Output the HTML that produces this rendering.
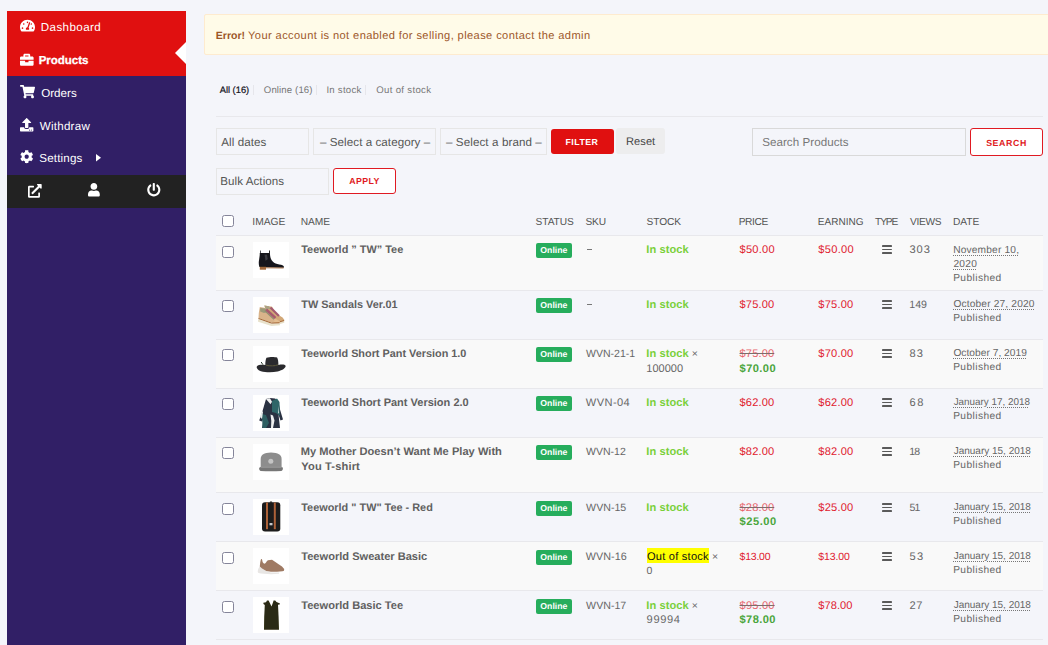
<!DOCTYPE html>
<html lang="en">
<head>
<meta charset="utf-8">
<title>Products</title>
<style>
*{box-sizing:border-box;margin:0;padding:0}
html,body{width:1048px;height:645px;overflow:hidden;background:#f4f5fa;font-family:"Liberation Sans",sans-serif}
body{position:relative}
.a{position:absolute}
.t{position:absolute;white-space:pre;line-height:16px;text-rendering:geometricPrecision;font-family:"Liberation Sans",sans-serif}
#side{left:7px;top:11px;width:179px;height:634px;background:#311f66}
#red{left:7px;top:11px;width:179px;height:65px;background:#e01010}
#tri{left:175px;top:42px;width:0;height:0;border-style:solid;border-width:11px 11px 11px 0;border-color:transparent #fff transparent transparent}
#dark{left:7px;top:175px;width:179px;height:33px;background:#222}
svg{position:absolute;overflow:visible}
#alert{left:204px;top:14px;width:860px;height:41px;background:#fffbe8;border:1px solid #feebcf;border-radius:2px}
.hr{left:216px;width:827px;height:1px;background:#e8e8ec}
.sel{height:27px;border:1px solid #e6e6e6;background:#f4f5fa}
.btn{border-radius:3px}
.row{left:216px;width:827px}
.odd{background:#f9f9f9}
.cb{left:222px;width:12px;height:12px;border:1px solid #85859a;border-radius:2.5px;background:#fff}
.img{left:253px;width:36px;height:36px;background:#fff}
.bd{left:536px;width:36px;height:15px;background:#26ad5c;border-radius:2px}
.bars{left:881.5px;width:10.5px;height:9px}
.bars i{position:absolute;left:0;width:100%;height:1.6px;background:#5a5a5a;border-radius:.4px}
.sep{width:1px;height:10px;top:85px;background:#e6e6eb}
</style>
</head>
<body>
<!-- sidebar -->
<div class="a" id="side"></div>
<div class="a" id="red"></div>
<div class="a" id="tri"></div>
<div class="a" id="dark"></div>
<svg style="left:20.1px;top:19.3px" width="15.02" height="13.35" viewBox="0 0 576 512"><path fill="#fff" d="M288 32C128.94 32 0 160.94 0 320c0 52.8 14.25 102.26 39.06 144.8 5.61 9.62 16.3 15.2 27.44 15.2h443c11.14 0 21.83-5.58 27.44-15.2C561.75 422.26 576 372.8 576 320c0-159.06-128.94-288-288-288zm0 64c14.71 0 26.58 10.13 30.32 23.65-1.11 2.26-2.64 4.23-3.45 6.67l-9.22 27.67c-5.13 3.49-10.97 6.01-17.64 6.01-17.67 0-32-14.33-32-32S270.33 96 288 96zM96 384c-17.67 0-32-14.33-32-32s14.33-32 32-32 32 14.33 32 32-14.33 32-32 32zm48-160c-17.67 0-32-14.33-32-32s14.33-32 32-32 32 14.33 32 32-14.33 32-32 32zm246.77-72.41l-61.33 184C343.13 347.33 352 364.54 352 384c0 11.72-3.38 22.55-8.88 32H232.88c-5.5-9.45-8.88-20.28-8.88-32 0-33.94 26.5-61.43 59.9-63.59l61.34-184.01c4.17-12.56 17.73-19.45 30.36-15.17 12.57 4.19 19.35 17.79 15.17 30.36zm14.66 57.2l15.52-46.55c3.47-1.29 7.13-2.23 11.05-2.23 17.67 0 32 14.33 32 32s-14.33 32-32 32c-11.38-.01-20.89-6.28-26.57-15.22zM480 384c-17.67 0-32-14.33-32-32s14.33-32 32-32 32 14.33 32 32-14.33 32-32 32z"/></svg>
<svg style="left:20.1px;top:52.5px" width="13.60" height="13.60" viewBox="0 0 512 512"><path fill="#fff" d="M320 336c0 8.84-7.16 16-16 16h-96c-8.84 0-16-7.16-16-16v-48H0v144c0 25.6 22.4 48 48 48h416c25.6 0 48-22.4 48-48V288H320v48zm144-208h-80V80c0-25.6-22.4-48-48-48H176c-25.6 0-48 22.4-48 48v48H48c-25.6 0-48 22.4-48 48v80h512v-80c0-25.6-22.4-48-48-48zm-144 0H192V96h128v32z"/></svg>
<svg style="left:20.4px;top:85.3px" width="15.02" height="13.35" viewBox="0 0 576 512"><path fill="#fff" d="M528.12 301.319l47.273-208C578.806 78.301 567.391 64 551.99 64H159.208l-9.166-44.81C147.758 8.021 137.93 0 126.529 0H24C10.745 0 0 10.745 0 24v16c0 13.255 10.745 24 24 24h69.883l70.248 343.435C147.325 417.1 136 435.222 136 456c0 30.928 25.072 56 56 56s56-25.072 56-56c0-15.674-6.447-29.835-16.824-40h209.647C430.447 426.165 424 440.326 424 456c0 30.928 25.072 56 56 56s56-25.072 56-56c0-22.172-12.888-41.332-31.579-50.405l5.517-24.276c3.413-15.018-8.002-29.319-23.403-29.319H218.117l-6.545-32h293.145c11.206 0 20.92-7.754 23.403-18.681z"/></svg>
<svg style="left:20.4px;top:117.9px" width="13.40" height="13.40" viewBox="0 0 512 512"><path fill="#fff" d="M296 384h-80c-13.3 0-24-10.7-24-24V192h-87.7c-17.8 0-26.7-21.5-14.1-34.1L242.3 5.7c7.5-7.5 19.8-7.5 27.3 0l152.2 152.2c12.6 12.6 3.7 34.1-14.1 34.1H320v168c0 13.3-10.7 24-24 24zm216-8v112c0 13.3-10.7 24-24 24H24c-13.3 0-24-10.7-24-24V376c0-13.3 10.7-24 24-24h136v8c0 30.9 25.1 56 56 56h80c30.9 0 56-25.1 56-56v-8h136c13.3 0 24 10.7 24 24zm-124 88c0-11-9-20-20-20s-20 9-20 20 9 20 20 20 20-9 20-20zm64 0c0-11-9-20-20-20s-20 9-20 20 9 20 20 20 20-9 20-20z"/></svg>
<svg style="left:20.1px;top:150.4px" width="13.40" height="13.40" viewBox="0 0 512 512"><path fill="#fff" d="M487.4 315.7l-42.6-24.6c4.3-23.2 4.3-47 0-70.2l42.6-24.6c4.9-2.8 7.1-8.6 5.5-14-11.1-35.6-30-67.8-54.7-94.6-3.8-4.1-10-5.1-14.8-2.3L380.8 110c-17.9-15.4-38.5-27.3-60.8-35.1V25.800c0-5.600-3.900-10.500-9.400-11.700-36.700-8.200-74.300-7.800-109.200 0-5.500 1.200-9.400 6.100-9.400 11.700V75c-22.200 7.900-42.800 19.800-60.800 35.100L88.700 85.500c-4.900-2.800-11-1.900-14.800 2.300-24.700 26.700-43.600 58.900-54.700 94.600-1.700 5.400.6 11.200 5.500 14L67.300 221c-4.300 23.200-4.300 47 0 70.200l-42.600 24.600c-4.900 2.800-7.100 8.600-5.500 14 11.100 35.600 30 67.800 54.700 94.600 3.800 4.100 10 5.100 14.800 2.300l42.600-24.600c17.900 15.400 38.500 27.300 60.800 35.100v49.200c0 5.600 3.900 10.500 9.400 11.700 36.700 8.200 74.300 7.800 109.200 0 5.500-1.200 9.400-6.100 9.400-11.700v-49.200c22.200-7.900 42.800-19.800 60.800-35.100l42.600 24.600c4.900 2.800 11 1.900 14.800-2.300 24.700-26.700 43.600-58.900 54.700-94.600 1.500-5.500-.7-11.300-5.600-14.100zM256 336c-44.100 0-80-35.900-80-80s35.900-80 80-80 80 35.900 80 80-35.900 80-80 80z"/></svg>
<svg style="left:96px;top:153.6px" width="5" height="7.6" viewBox="0 0 5 7.6"><path fill="#fff" d="M0 0L5 3.800L0 7.600z"/></svg>
<svg style="left:28px;top:183.5px" width="13.70" height="13.70" viewBox="0 0 512 512"><path fill="#fff" d="M432 320h-32a16 16 0 0 0-16 16v112H64V128h144a16 16 0 0 0 16-16V80a16 16 0 0 0-16-16H48a48 48 0 0 0-48 48v352a48 48 0 0 0 48 48h352a48 48 0 0 0 48-48V336a16 16 0 0 0-16-16zM488 0H360c-21.370 0-32.050 25.910-17 41l35.730 35.730L135 320.370a24 24 0 0 0 0 34L157.670 377a24 24 0 0 0 34 0l243.610-243.680L471 169c15 15 41 4.500 41-17V24a24 24 0 0 0-24-24z"/></svg>
<svg style="left:88.3px;top:183.4px" width="11.81" height="13.50" viewBox="0 0 448 512"><path fill="#fff" d="M224 256c70.700 0 128-57.300 128-128S294.700 0 224 0 96 57.300 96 128s57.300 128 128 128zm89.600 32h-16.700c-22.200 10.200-46.900 16-72.900 16s-50.600-5.800-72.900-16h-16.700C60.200 288 0 348.200 0 422.400V464c0 26.500 21.500 48 48 48h352c26.500 0 48-21.500 48-48v-41.600c0-74.200-60.200-134.400-134.400-134.400z"/></svg>
<svg style="left:147.3px;top:183.3px" width="13.60" height="13.60" viewBox="0 0 512 512"><path fill="#fff" d="M400 54.100c63 45 104 118.600 104 201.900 0 136.800-110.800 247.700-247.500 248C120 504.300 8.200 393 8 256.400 7.900 173.100 48.900 99.300 111.800 54.200c11.700-8.300 28-4.800 35 7.700L162.600 90c5.900 10.500 3.100 23.800-6.600 31-41.500 30.800-68 79.600-68 134.900-.1 92.300 74.500 168.100 168 168.100 91.600 0 168.600-74.200 168-169.100-.3-51.800-24.700-101.800-68.100-134-9.700-7.200-12.400-20.500-6.500-30.900l15.800-28.100c7-12.400 23.200-16.100 34.800-7.800zM296 264V24c0-13.300-10.700-24-24-24h-32c-13.300 0-24 10.700-24 24v240c0 13.300 10.700 24 24 24h32c13.300 0 24-10.700 24-24z"/></svg>
<!-- alert -->
<div class="a" id="alert"></div>
<!-- tabs -->
<div class="a sep" style="left:253px"></div>
<div class="a sep" style="left:316px"></div>
<div class="a sep" style="left:365px"></div>
<div class="a hr" style="top:116px"></div>
<!-- filters -->
<div class="a sel" style="left:216px;top:128px;width:93px"></div>
<div class="a sel" style="left:313px;top:128px;width:123px"></div>
<div class="a sel" style="left:440px;top:128px;width:107px"></div>
<div class="a btn" style="left:551px;top:129px;width:63px;height:25px;background:#e01010"></div>
<div class="a btn" style="left:616px;top:128px;width:49px;height:26px;background:#ededee"></div>
<div class="a" style="left:752px;top:128px;width:214px;height:28px;border:1px solid #d9d9d9;background:#f4f5fa"></div>
<div class="a btn" style="left:970px;top:128px;width:73px;height:28px;border:1px solid #e01a22;background:#fff"></div>
<div class="a sel" style="left:216px;top:168px;width:113px"></div>
<div class="a btn" style="left:333px;top:168px;width:63px;height:26px;border:1px solid #e01a22;background:#fff"></div>
<!-- table -->
<div class="a cb" style="top:215px"></div>
<div class="a hr" style="top:235px"></div>
<svg width="0" height="0" style="left:0;top:0"><defs><filter id="bl" x="-10%" y="-10%" width="120%" height="120%"><feGaussianBlur stdDeviation="0.45"/></filter></defs></svg>
<div class="a row odd" style="top:236px;height:54px"></div>
<div class="a hr" style="top:290px"></div>
<div class="a cb" style="top:246px"></div>
<svg style="left:253px;top:242px" width="36" height="36" viewBox="0 0 36 36"><rect width="36" height="36" fill="#fff"/><g filter="url(#bl)"><path fill="#16161a" d="M7.100 8.400L7.800 8.400L7.800 11L16 11L16 8.400L16.900 8.400L16.900 11C17 14 17.500 16 18.500 18C20 20.500 22 21.500 24.300 22C27 22.600 29.500 22.800 30.500 24C31.200 24.800 31 25.700 30.500 25.700L13 25.300L6.400 24.900C5.600 22.500 5.600 20 6.200 17C6.600 14.500 6.800 13 6.800 11L7.100 11Z"/><path fill="#3a3a42" d="M11.500 12.500l2.500 .300l.800 4.500l-2.300 1.500z"/><rect x="6.800" y="24.800" width="6.200" height="2.900" fill="#a0673a"/><path d="M12.900 25.800L30.600 26" stroke="#a0673a" stroke-width=".9"/></g></svg>
<div class="a bd" style="top:243px"></div>
<div class="a bars" style="top:245.3px"><i style="top:0"></i><i style="top:3.55px"></i><i style="top:7.1px"></i></div>
<div class="a" style="left:586.5px;top:249px;width:5.5px;height:1px;background:#777"></div>
<div class="a row" style="top:291px;height:48px"></div>
<div class="a hr" style="top:339px"></div>
<div class="a cb" style="top:300px"></div>
<svg style="left:253px;top:297px" width="36" height="36" viewBox="0 0 36 36"><rect width="36" height="36" fill="#fff"/><g filter="url(#bl)"><path fill="#d2a878" d="M11.300 8.400L19.100 9.700L23 16.500L29.600 20.400L31.200 22.700L30.900 24.300L27 25L20 22L13 14Z"/><path fill="#e6dfc8" d="M26.500 25.200L31.200 23.900L31.300 25.700L27 27Z"/><path stroke="#a0612f" stroke-width=".9" d="M26.500 24.900L31.200 23.500"/><path fill="#a9a284" d="M11.300 8.400L16 9.200L17.500 12L13 12Z"/><path stroke="#a45a70" stroke-width="2.200" d="M17.500 10.500L26 19"/><path fill="#e8e2cc" d="M5.100 22.100L18.500 26.600L27 26.300L27 28.200L18.500 28.900L5.100 24.700Z"/><path fill="#d9b38a" d="M6.800 10L12.600 11L16.500 17.800L23 21.700L26.600 24.300L26.300 26L18.500 25.800L5.500 21.300L5.800 15.900Z"/><path fill="#9c9a7a" d="M7.200 11L12.500 11.500L14.500 15L11 16L7.200 14.500Z"/><path stroke="#8f8f70" stroke-width="1.200" d="M11.800 13.800L21 22.300"/><path stroke="#a85a6e" stroke-width="2.400" d="M13.200 12.500L22.500 21"/><path fill="#e3bd90" d="M21.700 21.700L26.600 24.300L26.300 26L21 25.800Z"/><path fill="none" stroke="#a0612f" stroke-width="1" d="M5.500 21.500L18.500 26.100L26.600 25.800"/></g></svg>
<div class="a bd" style="top:298px"></div>
<div class="a bars" style="top:300.3px"><i style="top:0"></i><i style="top:3.55px"></i><i style="top:7.1px"></i></div>
<div class="a" style="left:586.5px;top:304px;width:5.5px;height:1px;background:#777"></div>
<div class="a row odd" style="top:340px;height:48px"></div>
<div class="a hr" style="top:388px"></div>
<div class="a cb" style="top:349px"></div>
<svg style="left:253px;top:346px" width="36" height="36" viewBox="0 0 36 36"><rect width="36" height="36" fill="#fff"/><g filter="url(#bl)"><path fill="#2c2c2f" d="M12.300 19c0-3 .400-6 1.200-7.200 3-.900 8-.900 10.600-.200 1 1.500 1.300 4.500 1.300 7.400 3-.600 6.500-.800 7.200.800.500 2-3 4.500-8 5.700-5 1.100-12 1.100-16.600-.300C4.500 24 3 21.500 4 20.200c1.200-1.500 5-1.500 8.300-1.200z"/><path d="M13 19.200c4 1 9 .800 12-.400" stroke="#5a563a" stroke-width="1" fill="none"/><path d="M8.200 16l1.600 2.600" stroke="#2c3a30" stroke-width="1" fill="none"/></g></svg>
<div class="a bd" style="top:347px"></div>
<div class="a bars" style="top:349.3px"><i style="top:0"></i><i style="top:3.55px"></i><i style="top:7.1px"></i></div>
<div class="a row" style="top:389px;height:48px"></div>
<div class="a hr" style="top:437px"></div>
<div class="a cb" style="top:398px"></div>
<svg style="left:253px;top:395px" width="36" height="36" viewBox="0 0 36 36"><rect width="36" height="36" fill="#fff"/><g filter="url(#bl)"><path fill="#2b3042" d="M13 4l4-1 5 .500 3 2 2 9 3 10-2.500 1-2-6 1.500 13.500H9l2.500-12-2.500 5.500-2.800-1 3.500-10z"/><path fill="#2f6668" d="M19 6l5-2.500 2.500 3.500.500 14-4-3-4-1z"/><path fill="#2d5f62" d="M9 19l4 1 3 8-3 5H9.500z"/><path fill="#f2f2f2" d="M13 4l4-.800 2 3.500-1.500 2.500z"/><path fill="#eef0f0" d="M17.500 19.500l2.500 1 1.500 5-1.500 7.500h-2l.300-7z"/><path fill="#e8eeee" d="M7 22l2-6 1 1-1 7z"/><path fill="#e8eeee" d="M25.500 11l.600 7-.900.500z"/></g></svg>
<div class="a bd" style="top:396px"></div>
<div class="a bars" style="top:398.3px"><i style="top:0"></i><i style="top:3.55px"></i><i style="top:7.1px"></i></div>
<div class="a row odd" style="top:438px;height:54px"></div>
<div class="a hr" style="top:492px"></div>
<div class="a cb" style="top:447px"></div>
<svg style="left:253px;top:444px" width="36" height="36" viewBox="0 0 36 36"><rect width="36" height="36" fill="#fff"/><g filter="url(#bl)"><path fill="#8d8d8d" d="M7.700 23.500L7.700 15C7.700 10.500 11 8.600 18 8.400C25 8.600 28.600 10.500 28.600 15L28.600 23.500Z"/><path fill="#777" d="M6.100 24.600c0-1 .800-1.600 1.600-1.600h20.900c.800 0 1.300.600 1.300 1.600s-.500 2.200-1.500 2.400c-7 .400-14 .400-20.800 0-1-.200-1.500-1.400-1.500-2.400z"/><path stroke="#a8a8a8" stroke-width=".700" d="M7.500 23.300h21.300"/><circle cx="17.800" cy="17.200" r="2.500" fill="#c4c4c4"/></g></svg>
<div class="a bd" style="top:445px"></div>
<div class="a bars" style="top:447.3px"><i style="top:0"></i><i style="top:3.55px"></i><i style="top:7.1px"></i></div>
<div class="a row" style="top:493px;height:48px"></div>
<div class="a hr" style="top:541px"></div>
<div class="a cb" style="top:503px"></div>
<svg style="left:253px;top:499px" width="36" height="36" viewBox="0 0 36 36"><rect width="36" height="36" fill="#fff"/><g filter="url(#bl)"><rect x="9" y="3.200" width="18.300" height="29.300" rx="3" fill="#1b1b1d"/><rect x="16.800" y="2.600" width="2.400" height="1.200" rx=".5" fill="#1b1b1d"/><rect x="13" y="3.500" width="2" height="26.700" fill="#ad6238"/><rect x="20.800" y="3.500" width="2" height="26.700" fill="#ad6238"/><rect x="16.500" y="24" width="3" height="2.300" fill="#c9c9cc"/></g></svg>
<div class="a bd" style="top:501px"></div>
<div class="a bars" style="top:503.3px"><i style="top:0"></i><i style="top:3.55px"></i><i style="top:7.1px"></i></div>
<div class="a row odd" style="top:542px;height:48px"></div>
<div class="a hr" style="top:590px"></div>
<div class="a cb" style="top:552px"></div>
<svg style="left:253px;top:548px" width="36" height="36" viewBox="0 0 36 36"><rect width="36" height="36" fill="#fff"/><g filter="url(#bl)"><path fill="#e8e6e4" d="M4.800 23C5 21 6 19 6.800 18.500L9 20.500L13.300 23L18 24.400L26.300 24.600L26 25.800C18 26.500 9 26 5.500 25C4.800 24.500 4.600 23.800 4.800 23Z"/><path fill="#9f7a63" d="M6.800 18.500C7 16 7.300 13.500 7.900 11.500C8.300 10.800 9 11 9.200 12C9.500 14 10 15.500 11.500 15.800C12.800 15.500 13.500 13 15 12.200L19 11.800L22 13.800L26 16.500L29 18.500L31.200 21L31 22.800L29.500 23.300L24 23.800L18 23.800L13.300 23L9 20.500Z"/></g></svg>
<div class="a bd" style="top:550px"></div>
<div class="a bars" style="top:552.3px"><i style="top:0"></i><i style="top:3.55px"></i><i style="top:7.1px"></i></div>
<div class="a" style="left:647px;top:548px;width:62px;height:15px;background:#ffff00"></div>
<div class="a row" style="top:591px;height:48px"></div>
<div class="a hr" style="top:639px"></div>
<div class="a cb" style="top:601px"></div>
<svg style="left:253px;top:597px" width="36" height="36" viewBox="0 0 36 36"><rect width="36" height="36" fill="#fff"/><g filter="url(#bl)"><path fill="#2b2a12" d="M10.300 5.800L13 5.200L14 3.600L15.600 3.400L16.600 5.500L18.500 9.400L20 5.500L20.600 3.500L22.200 3.400L23.500 5L27 6.600L26.600 7.600L25 7.800L25.600 20L26 32.800L11 32.800L11.200 20L11.800 8L10.500 7Z"/></g></svg>
<div class="a bd" style="top:599px"></div>
<div class="a bars" style="top:601.3px"><i style="top:0"></i><i style="top:3.55px"></i><i style="top:7.1px"></i></div>
<span class="t" style="left:40.80px;top:20px;font-size:11.6px;color:#fff;letter-spacing:0.400px;">Dashboard</span>
<span class="t" style="left:38.65px;top:53px;font-size:11.52px;font-weight:700;color:#fff;letter-spacing:-0.021px;-webkit-text-stroke:0.3px #fff;">Products</span>
<span class="t" style="left:41.20px;top:86px;font-size:11.6px;color:#fff;letter-spacing:0.020px;">Orders</span>
<span class="t" style="left:39.80px;top:119px;font-size:11.6px;color:#fff;letter-spacing:0.236px;">Withdraw</span>
<span class="t" style="left:39.30px;top:151px;font-size:11.6px;color:#fff;letter-spacing:0.171px;">Settings</span>
<span class="t" style="left:215.85px;top:28px;font-size:10.52px;font-weight:700;color:#9c5628;">Error!</span>
<span class="t" style="left:248.10px;top:28px;font-size:11.1px;color:#9c5628;letter-spacing:0.397px;">Your account is not enabled for selling, please contact the admin</span>
<span class="t" style="left:219.70px;top:82px;font-size:9.29px;color:#15151f;letter-spacing:0.007px;-webkit-text-stroke:0.22px #15151f;">All (16)</span>
<span class="t" style="left:263.80px;top:83px;font-size:9.6px;color:#777;letter-spacing:0.125px;">Online (16)</span>
<span class="t" style="left:326.40px;top:83px;font-size:9.6px;color:#777;letter-spacing:0.271px;">In stock</span>
<span class="t" style="left:376.30px;top:83px;font-size:9.6px;color:#777;letter-spacing:0.318px;">Out of stock</span>
<span class="t" style="left:221.30px;top:135px;font-size:11.6px;color:#555;letter-spacing:0.075px;">All dates</span>
<span class="t" style="left:320.00px;top:135px;font-size:11.6px;color:#555;letter-spacing:0.065px;">– Select a category –</span>
<span class="t" style="left:446.00px;top:135px;font-size:11.6px;color:#555;letter-spacing:0.100px;">– Select a brand –</span>
<span class="t" style="left:565.50px;top:134px;font-size:8.8px;font-weight:700;color:#fff;letter-spacing:0.450px;">FILTER</span>
<span class="t" style="left:626.00px;top:134px;font-size:11.1px;color:#444;letter-spacing:0.050px;">Reset</span>
<span class="t" style="left:762.20px;top:135px;font-size:11.6px;color:#777;letter-spacing:0.046px;">Search Products</span>
<span class="t" style="left:986.15px;top:135px;font-size:8.8px;font-weight:700;color:#e01a22;letter-spacing:0.590px;">SEARCH</span>
<span class="t" style="left:220.30px;top:174px;font-size:11.6px;color:#555;letter-spacing:0.059px;">Bulk Actions</span>
<span class="t" style="left:349.25px;top:173px;font-size:8.8px;font-weight:700;color:#e01a22;letter-spacing:0.400px;">APPLY</span>
<span class="t" style="left:252.30px;top:215px;font-size:10.3px;color:#555;letter-spacing:-0.012px;">IMAGE</span>
<span class="t" style="left:300.65px;top:215px;font-size:10.22px;color:#555;letter-spacing:-0.017px;">NAME</span>
<span class="t" style="left:535.60px;top:215px;font-size:10.2px;color:#555;letter-spacing:-0.090px;">STATUS</span>
<span class="t" style="left:585.40px;top:215px;font-size:10.2px;color:#555;letter-spacing:-0.125px;">SKU</span>
<span class="t" style="left:646.50px;top:215px;font-size:10.2px;color:#555;letter-spacing:-0.062px;">STOCK</span>
<span class="t" style="left:738.65px;top:215px;font-size:10.2px;color:#555;letter-spacing:-0.350px;">PRICE</span>
<span class="t" style="left:817.85px;top:215px;font-size:10.04px;color:#555;letter-spacing:-0.008px;">EARNING</span>
<span class="t" style="left:875.05px;top:215px;font-size:10.2px;color:#555;letter-spacing:-1.100px;">TYPE</span>
<span class="t" style="left:910.10px;top:215px;font-size:10.2px;color:#555;letter-spacing:-0.325px;">VIEWS</span>
<span class="t" style="left:952.95px;top:215px;font-size:10.22px;color:#555;letter-spacing:-0.017px;">DATE</span>
<span class="t" style="left:301.25px;top:242px;font-size:10.91px;font-weight:700;color:#606060;">Teeworld ” TW” Tee</span>
<span class="t" style="left:540.35px;top:242px;font-size:8.71px;font-weight:700;color:#fff;letter-spacing:-0.020px;">Online</span>
<span class="t" style="left:646.25px;top:242px;font-size:11.1px;font-weight:700;color:#7ad03a;letter-spacing:0.079px;">In stock</span>
<span class="t" style="left:739.55px;top:242px;font-size:11.1px;color:#e0202e;letter-spacing:0.230px;">$50.00</span>
<span class="t" style="left:818.35px;top:242px;font-size:11.1px;color:#e0202e;letter-spacing:0.290px;">$50.00</span>
<span class="t" style="left:909.60px;top:242px;font-size:11.1px;color:#666;letter-spacing:0.850px;">303</span>
<span class="t" style="left:953.15px;top:243px;font-size:10.2px;color:#666;letter-spacing:0.168px;text-decoration:underline dotted #777;text-underline-offset:1.5px;">November 10,</span>
<span class="t" style="left:953.40px;top:257px;font-size:10.2px;color:#666;letter-spacing:0.317px;text-decoration:underline dotted #777;text-underline-offset:1.5px;">2020</span>
<span class="t" style="left:953.15px;top:271px;font-size:10.2px;color:#666;letter-spacing:0.419px;">Published</span>
<span class="t" style="left:301.25px;top:297px;font-size:10.89px;font-weight:700;color:#606060;letter-spacing:0.019px;">TW Sandals Ver.01</span>
<span class="t" style="left:540.35px;top:297px;font-size:8.71px;font-weight:700;color:#fff;letter-spacing:-0.020px;">Online</span>
<span class="t" style="left:646.25px;top:297px;font-size:11.1px;font-weight:700;color:#7ad03a;letter-spacing:0.079px;">In stock</span>
<span class="t" style="left:739.55px;top:297px;font-size:11.1px;color:#e0202e;letter-spacing:0.130px;">$75.00</span>
<span class="t" style="left:818.35px;top:297px;font-size:11.1px;color:#e0202e;letter-spacing:0.190px;">$75.00</span>
<span class="t" style="left:909.35px;top:297px;font-size:10.6px;color:#666;letter-spacing:-0.100px;">149</span>
<span class="t" style="left:953.40px;top:297px;font-size:10.2px;color:#666;letter-spacing:0.157px;text-decoration:underline dotted #777;text-underline-offset:1.5px;">October 27, 2020</span>
<span class="t" style="left:953.15px;top:311px;font-size:10.2px;color:#666;letter-spacing:0.419px;">Published</span>
<span class="t" style="left:301.25px;top:346px;font-size:10.85px;font-weight:700;color:#606060;letter-spacing:0.008px;">Teeworld Short Pant Version 1.0</span>
<span class="t" style="left:540.35px;top:346px;font-size:8.71px;font-weight:700;color:#fff;letter-spacing:-0.020px;">Online</span>
<span class="t" style="left:586.10px;top:346px;font-size:10.54px;color:#666;letter-spacing:-0.021px;">WVN-21-1</span>
<span class="t" style="left:646.25px;top:346px;font-size:11.1px;font-weight:700;color:#7ad03a;letter-spacing:0.079px;">In stock</span>
<span class="t" style="left:691.85px;top:346px;font-size:10.5px;color:#666;">×</span>
<span class="t" style="left:646.35px;top:361px;font-size:10.99px;color:#666;">100000</span>
<span class="t" style="left:739.55px;top:346px;font-size:11.1px;color:#e8646c;letter-spacing:0.130px;text-decoration:line-through #7d6c6c;">$75.00</span>
<span class="t" style="left:739.55px;top:361px;font-size:11.1px;font-weight:700;color:#4aa53c;letter-spacing:0.430px;">$70.00</span>
<span class="t" style="left:818.35px;top:346px;font-size:11.1px;color:#e0202e;letter-spacing:0.190px;">$70.00</span>
<span class="t" style="left:909.60px;top:346px;font-size:11.1px;color:#666;letter-spacing:0.900px;">83</span>
<span class="t" style="left:953.40px;top:346px;font-size:10.2px;color:#666;letter-spacing:0.029px;text-decoration:underline dotted #777;text-underline-offset:1.5px;">October 7, 2019</span>
<span class="t" style="left:953.15px;top:360px;font-size:10.2px;color:#666;letter-spacing:0.419px;">Published</span>
<span class="t" style="left:301.25px;top:395px;font-size:11.01px;font-weight:700;color:#606060;letter-spacing:0.005px;">Teeworld Short Pant Version 2.0</span>
<span class="t" style="left:540.35px;top:395px;font-size:8.71px;font-weight:700;color:#fff;letter-spacing:-0.020px;">Online</span>
<span class="t" style="left:585.85px;top:395px;font-size:11.1px;color:#666;letter-spacing:0.390px;">WVN-04</span>
<span class="t" style="left:646.25px;top:395px;font-size:11.1px;font-weight:700;color:#7ad03a;letter-spacing:0.079px;">In stock</span>
<span class="t" style="left:739.55px;top:395px;font-size:11.1px;color:#e0202e;letter-spacing:0.130px;">$62.00</span>
<span class="t" style="left:818.35px;top:395px;font-size:11.1px;color:#e0202e;letter-spacing:0.190px;">$62.00</span>
<span class="t" style="left:909.60px;top:395px;font-size:11.1px;color:#666;letter-spacing:1.400px;">68</span>
<span class="t" style="left:953.65px;top:395px;font-size:9.9px;color:#666;text-decoration:underline dotted #777;text-underline-offset:1.5px;">January 17, 2018</span>
<span class="t" style="left:953.15px;top:409px;font-size:10.2px;color:#666;letter-spacing:0.419px;">Published</span>
<span class="t" style="left:300.75px;top:444px;font-size:11.1px;font-weight:700;color:#606060;letter-spacing:0.021px;">My Mother Doesn’t Want Me Play With</span>
<span class="t" style="left:301.25px;top:459px;font-size:11.1px;font-weight:700;color:#606060;letter-spacing:0.145px;">You T-shirt</span>
<span class="t" style="left:540.35px;top:444px;font-size:8.71px;font-weight:700;color:#fff;letter-spacing:-0.020px;">Online</span>
<span class="t" style="left:586.10px;top:444px;font-size:10.51px;color:#666;letter-spacing:-0.010px;">WVN-12</span>
<span class="t" style="left:646.25px;top:444px;font-size:11.1px;font-weight:700;color:#7ad03a;letter-spacing:0.079px;">In stock</span>
<span class="t" style="left:739.55px;top:444px;font-size:11.1px;color:#e0202e;letter-spacing:0.130px;">$82.00</span>
<span class="t" style="left:818.35px;top:444px;font-size:11.1px;color:#e0202e;letter-spacing:0.190px;">$82.00</span>
<span class="t" style="left:909.35px;top:444px;font-size:10.5px;color:#666;letter-spacing:-0.900px;">18</span>
<span class="t" style="left:953.65px;top:444px;font-size:10.02px;color:#666;letter-spacing:-0.010px;text-decoration:underline dotted #777;text-underline-offset:1.5px;">January 15, 2018</span>
<span class="t" style="left:953.15px;top:458px;font-size:10.2px;color:#666;letter-spacing:0.419px;">Published</span>
<span class="t" style="left:301.25px;top:500px;font-size:10.88px;font-weight:700;color:#606060;letter-spacing:0.009px;">Teeworld " TW" Tee - Red</span>
<span class="t" style="left:540.35px;top:500px;font-size:8.71px;font-weight:700;color:#fff;letter-spacing:-0.020px;">Online</span>
<span class="t" style="left:586.10px;top:500px;font-size:10.65px;color:#666;letter-spacing:-0.010px;">WVN-15</span>
<span class="t" style="left:646.25px;top:500px;font-size:11.1px;font-weight:700;color:#7ad03a;letter-spacing:0.079px;">In stock</span>
<span class="t" style="left:739.55px;top:500px;font-size:11.1px;color:#e8646c;letter-spacing:0.130px;text-decoration:line-through #7d6c6c;">$28.00</span>
<span class="t" style="left:739.55px;top:514px;font-size:11.1px;font-weight:700;color:#4aa53c;letter-spacing:0.530px;">$25.00</span>
<span class="t" style="left:818.35px;top:500px;font-size:11.1px;color:#e0202e;letter-spacing:0.190px;">$25.00</span>
<span class="t" style="left:909.60px;top:500px;font-size:10.5px;color:#666;letter-spacing:-0.950px;">51</span>
<span class="t" style="left:953.65px;top:500px;font-size:10.02px;color:#666;letter-spacing:-0.010px;text-decoration:underline dotted #777;text-underline-offset:1.5px;">January 15, 2018</span>
<span class="t" style="left:953.15px;top:514px;font-size:10.2px;color:#666;letter-spacing:0.419px;">Published</span>
<span class="t" style="left:301.25px;top:549px;font-size:11.08px;font-weight:700;color:#606060;">Teeworld Sweater Basic</span>
<span class="t" style="left:540.35px;top:549px;font-size:8.71px;font-weight:700;color:#fff;letter-spacing:-0.020px;">Online</span>
<span class="t" style="left:585.85px;top:549px;font-size:10.78px;color:#666;letter-spacing:0.040px;">WVN-16</span>
<span class="t" style="left:647.00px;top:549px;font-size:11.1px;color:#111;letter-spacing:0.218px;">Out of stock</span>
<span class="t" style="left:711.95px;top:549px;font-size:10.5px;color:#666;">×</span>
<span class="t" style="left:646.60px;top:563px;font-size:10.5px;color:#666;">0</span>
<span class="t" style="left:739.55px;top:549px;font-size:10.5px;color:#e0202e;letter-spacing:-0.220px;">$13.00</span>
<span class="t" style="left:818.35px;top:549px;font-size:10.5px;color:#e0202e;letter-spacing:-0.140px;">$13.00</span>
<span class="t" style="left:909.60px;top:549px;font-size:11.1px;color:#666;letter-spacing:1.300px;">53</span>
<span class="t" style="left:953.65px;top:549px;font-size:10.02px;color:#666;letter-spacing:-0.010px;text-decoration:underline dotted #777;text-underline-offset:1.5px;">January 15, 2018</span>
<span class="t" style="left:953.15px;top:563px;font-size:10.2px;color:#666;letter-spacing:0.419px;">Published</span>
<span class="t" style="left:301.25px;top:598px;font-size:11.08px;font-weight:700;color:#606060;">Teeworld Basic Tee</span>
<span class="t" style="left:540.35px;top:598px;font-size:8.71px;font-weight:700;color:#fff;letter-spacing:-0.020px;">Online</span>
<span class="t" style="left:586.10px;top:598px;font-size:10.65px;color:#666;letter-spacing:-0.010px;">WVN-17</span>
<span class="t" style="left:646.25px;top:598px;font-size:11.1px;font-weight:700;color:#7ad03a;letter-spacing:0.079px;">In stock</span>
<span class="t" style="left:691.85px;top:598px;font-size:10.5px;color:#666;">×</span>
<span class="t" style="left:646.60px;top:612px;font-size:11.1px;color:#666;letter-spacing:0.625px;">99994</span>
<span class="t" style="left:739.55px;top:598px;font-size:11.1px;color:#e8646c;letter-spacing:0.190px;text-decoration:line-through #7d6c6c;">$95.00</span>
<span class="t" style="left:739.55px;top:612px;font-size:11.1px;font-weight:700;color:#4aa53c;letter-spacing:0.390px;">$78.00</span>
<span class="t" style="left:818.35px;top:598px;font-size:11.1px;color:#e0202e;letter-spacing:0.030px;">$78.00</span>
<span class="t" style="left:909.60px;top:598px;font-size:11.1px;color:#666;letter-spacing:0.550px;">27</span>
<span class="t" style="left:953.65px;top:598px;font-size:10.02px;color:#666;letter-spacing:-0.010px;text-decoration:underline dotted #777;text-underline-offset:1.5px;">January 15, 2018</span>
<span class="t" style="left:953.15px;top:612px;font-size:10.2px;color:#666;letter-spacing:0.419px;">Published</span>
</body>
</html>
